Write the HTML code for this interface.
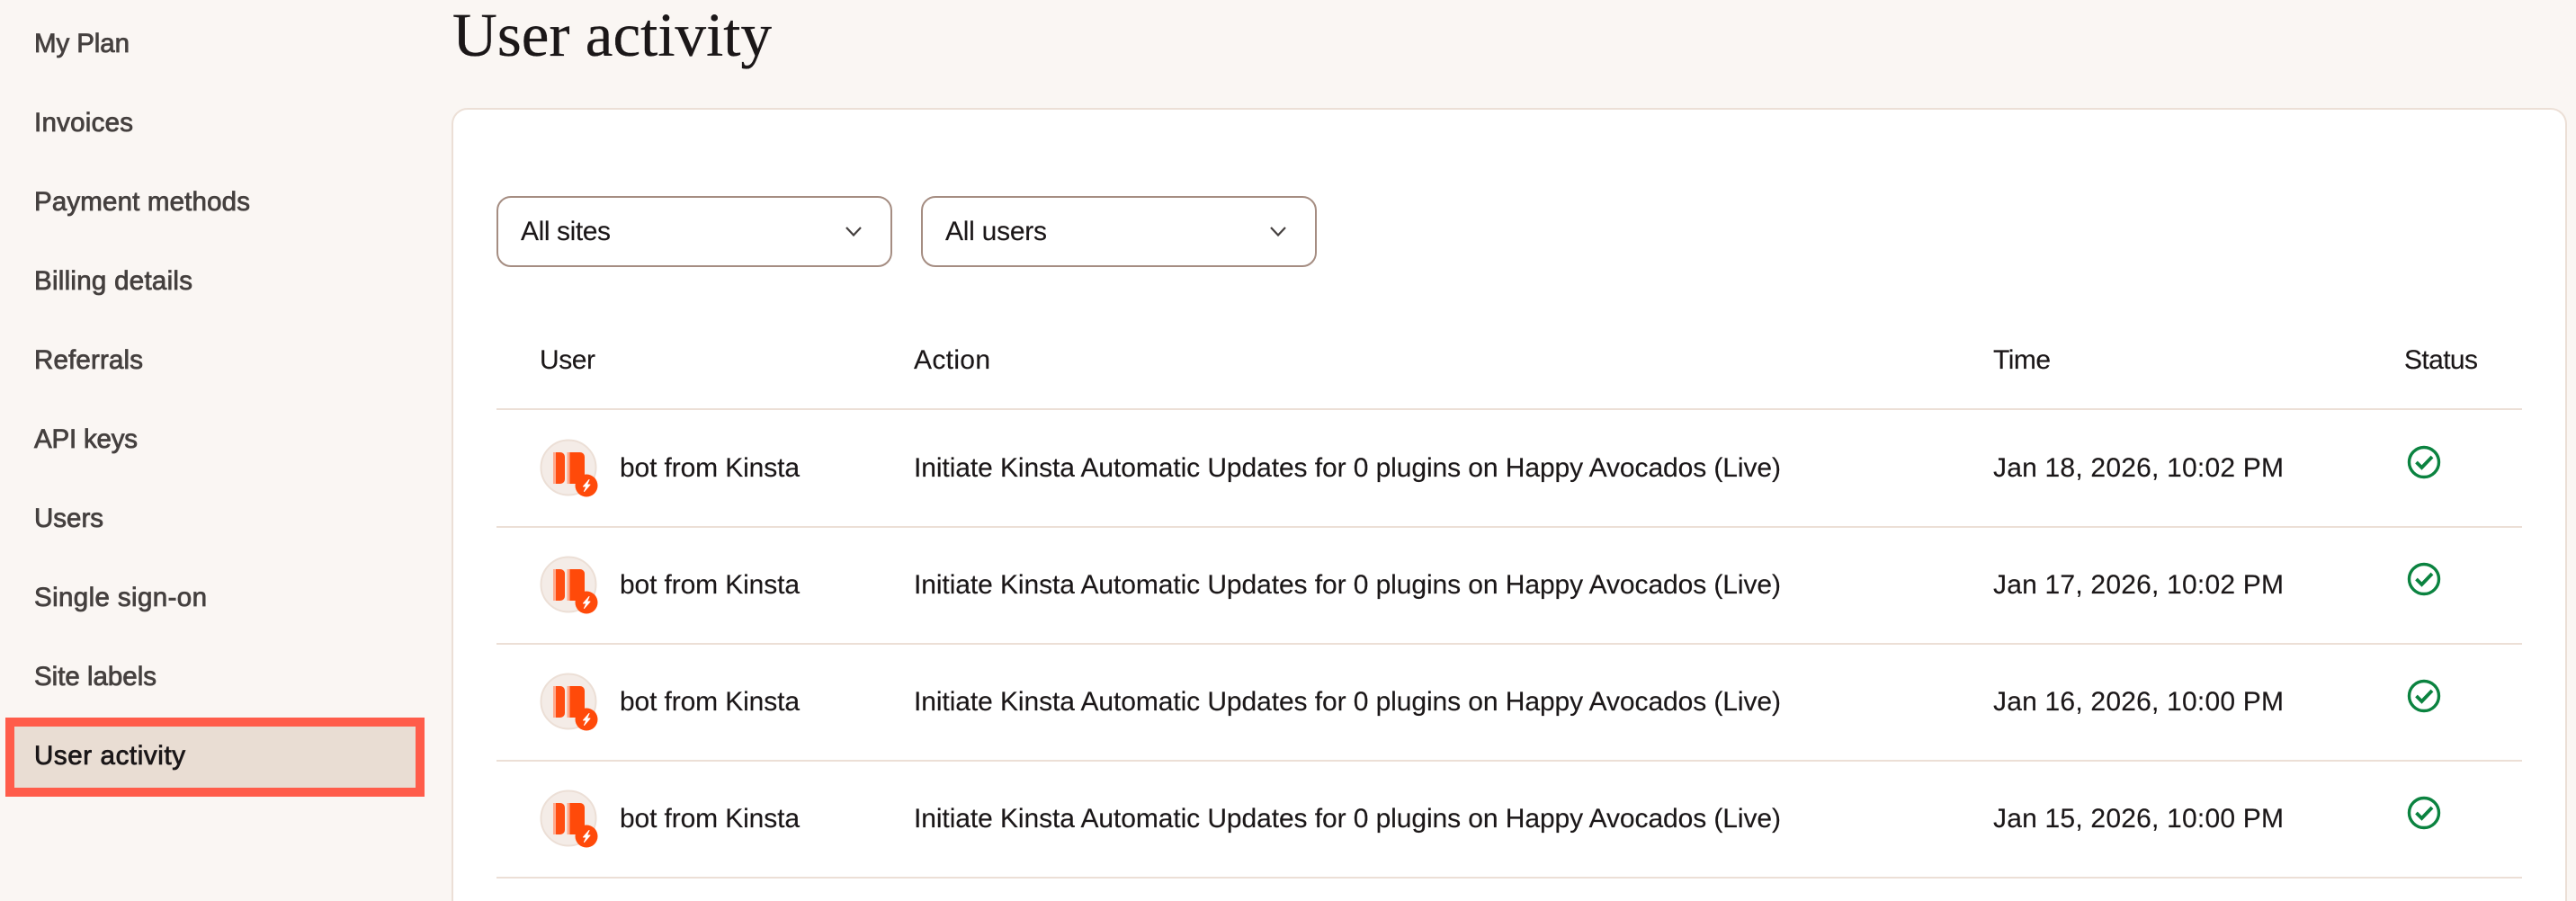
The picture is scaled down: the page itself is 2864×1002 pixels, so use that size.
<!DOCTYPE html>
<html lang="en">
<head>
<meta charset="utf-8">
<title>User activity</title>
<style>
html,body{margin:0;padding:0;width:2864px;height:1002px;overflow:hidden;background:#faf6f3}
svg{display:block}
text{font-family:"Liberation Sans",sans-serif;font-size:30px;fill:#1b1718;stroke:#1b1718;stroke-width:.15px}
.nav{font-size:29.5px;fill:#45403f;stroke:#45403f;stroke-width:.8px}
.act{font-size:29.5px;fill:#1b1718;stroke:#1b1718;stroke-width:.8px}
.title{font-family:"Liberation Serif",serif;font-size:69px;stroke-width:.3px}
</style>
</head>
<body>
<svg width="2864" height="1002" viewBox="0 0 2864 1002" xmlns="http://www.w3.org/2000/svg">
<defs>
<g id="av">
<circle cx="632" cy="520" r="30.5" fill="#f4ece7" stroke="#ecdfd6" stroke-width="2"/>
<rect x="615" y="503" width="5" height="35" fill="#ffa98c"/>
<path d="M618 503h5a5 5 0 0 1 5 5v25a5 5 0 0 1-5 5h-5z" fill="#ff4d12"/>
<rect x="630.500" y="503" width="5" height="35" fill="#ffa98c"/>
<path d="M633.500 503h11.500a5 5 0 0 1 5 5v30h-16.500z" fill="#ff4a0a"/>
<circle cx="652" cy="540" r="12.500" fill="#ff4a0a"/>
<path d="M655 533.500L648.500 541H652L649.500 546.500L656 539H652.500Z" fill="#fff" stroke="#fff" stroke-width="1" stroke-linejoin="round"/>
</g>
<g id="ok">
<circle cx="2695" cy="514" r="16.500" fill="none" stroke="#0b8340" stroke-width="3.400"/>
<path d="M2686.500 514L2692.500 520L2704 508" fill="none" stroke="#0b8340" stroke-width="3.800"/>
</g>
</defs>

<rect width="2864" height="1002" fill="#faf6f3"/>

<!-- sidebar -->
<text class="nav" x="38" y="58" textLength="106">My Plan</text>
<text class="nav" x="38" y="146" textLength="110">Invoices</text>
<text class="nav" x="38" y="234" textLength="240">Payment methods</text>
<text class="nav" x="38" y="322" textLength="176">Billing details</text>
<text class="nav" x="38" y="410" textLength="121">Referrals</text>
<text class="nav" x="38" y="498" textLength="115">API keys</text>
<text class="nav" x="38" y="586" textLength="77">Users</text>
<text class="nav" x="38" y="674" textLength="192">Single sign-on</text>
<text class="nav" x="38" y="762" textLength="136">Site labels</text>
<rect x="11" y="803" width="456" height="78" fill="#e9ddd3" stroke="#ff5c4a" stroke-width="10"/>
<text class="act" x="38" y="850" textLength="168">User activity</text>

<!-- title -->
<text class="title" x="503" y="62" textLength="355">User activity</text>

<!-- card -->
<rect x="503" y="121" width="2350" height="900" rx="17" fill="#fff" stroke="#ecdfd6" stroke-width="2"/>

<!-- selects -->
<rect x="553" y="219" width="438" height="77" rx="15" fill="#fff" stroke="#a58d82" stroke-width="2"/>
<text x="579" y="267" textLength="100">All sites</text>
<path d="M941 253L949 261.500L957 253" fill="none" stroke="#45403f" stroke-width="2.200"/>
<rect x="1025" y="219" width="438" height="77" rx="15" fill="#fff" stroke="#a58d82" stroke-width="2"/>
<text x="1051" y="267" textLength="113">All users</text>
<path d="M1413 253L1421 261.500L1429 253" fill="none" stroke="#45403f" stroke-width="2.200"/>

<!-- table head -->
<text x="600" y="410" textLength="62">User</text>
<text x="1016" y="410" textLength="85">Action</text>
<text x="2216" y="410" textLength="64">Time</text>
<text x="2673" y="410" textLength="82">Status</text>
<rect x="552" y="454" width="2252" height="2" fill="#ecdfd6"/>

<!-- row 1 -->
<use href="#av"/>
<text x="689" y="530" textLength="200">bot from Kinsta</text>
<text x="1016" y="530" textLength="964">Initiate Kinsta Automatic Updates for 0 plugins on Happy Avocados (Live)</text>
<text x="2216" y="530" textLength="323">Jan 18, 2026, 10:02 PM</text>
<use href="#ok"/>
<rect x="552" y="585" width="2252" height="2" fill="#ecdfd6"/>

<!-- row 2 -->
<use href="#av" y="130"/>
<text x="689" y="660" textLength="200">bot from Kinsta</text>
<text x="1016" y="660" textLength="964">Initiate Kinsta Automatic Updates for 0 plugins on Happy Avocados (Live)</text>
<text x="2216" y="660" textLength="323">Jan 17, 2026, 10:02 PM</text>
<use href="#ok" y="130"/>
<rect x="552" y="715" width="2252" height="2" fill="#ecdfd6"/>

<!-- row 3 -->
<use href="#av" y="260"/>
<text x="689" y="790" textLength="200">bot from Kinsta</text>
<text x="1016" y="790" textLength="964">Initiate Kinsta Automatic Updates for 0 plugins on Happy Avocados (Live)</text>
<text x="2216" y="790" textLength="323">Jan 16, 2026, 10:00 PM</text>
<use href="#ok" y="260"/>
<rect x="552" y="845" width="2252" height="2" fill="#ecdfd6"/>

<!-- row 4 -->
<use href="#av" y="390"/>
<text x="689" y="920" textLength="200">bot from Kinsta</text>
<text x="1016" y="920" textLength="964">Initiate Kinsta Automatic Updates for 0 plugins on Happy Avocados (Live)</text>
<text x="2216" y="920" textLength="323">Jan 15, 2026, 10:00 PM</text>
<use href="#ok" y="390"/>
<rect x="552" y="975" width="2252" height="2" fill="#ecdfd6"/>
</svg>
</body>
</html>
